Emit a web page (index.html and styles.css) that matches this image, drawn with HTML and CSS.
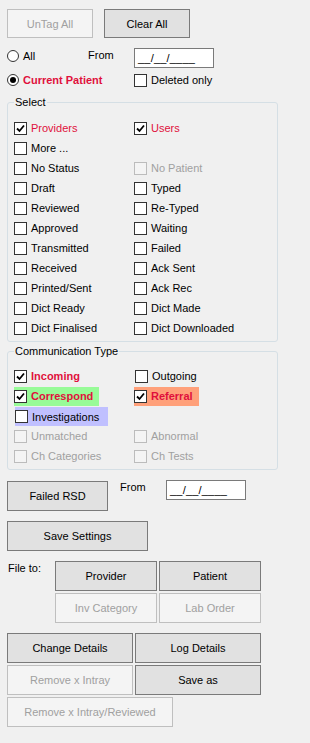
FILE: index.html
```html
<!DOCTYPE html>
<html>
    <head>
        <meta charset="utf-8">
        <title>Intray Filter</title>
        <link rel="stylesheet" href="styles.css">
    </head>
    <body>
        <div class="toprow">
            <button class="btn off top">UnTag All</button>
            <button class="btn top">Clear All</button>
        </div>

        <div class="opts">
            <label class="radio"><span class="dot"></span>All</label>
            <span class="lbl from1">From</span>
            <span class="date d1">__/__/____</span>
            <label class="radio on red bold wide"><span class="dot"></span>Current Patient</label>
            <label class="chk"><span class="box"></span>Deleted only</label>
        </div>

        <fieldset class="group sel">
            <legend>Select</legend>
            <div class="grid">
                <label class="chk red"><span class="box"><svg viewBox="0 0 11 11"><path d="M2 5.5 L4.5 8 L9 2.5"/></svg></span>Providers</label>
                <label class="chk red"><span class="box"><svg viewBox="0 0 11 11"><path d="M2 5.5 L4.5 8 L9 2.5"/></svg></span>Users</label>
                <label class="chk"><span class="box"></span>More ...</label>
                <span></span>
                <label class="chk"><span class="box"></span>No Status</label>
                <label class="chk dis"><span class="box"></span>No Patient</label>
                <label class="chk"><span class="box"></span>Draft</label>
                <label class="chk"><span class="box"></span>Typed</label>
                <label class="chk"><span class="box"></span>Reviewed</label>
                <label class="chk"><span class="box"></span>Re-Typed</label>
                <label class="chk"><span class="box"></span>Approved</label>
                <label class="chk"><span class="box"></span>Waiting</label>
                <label class="chk"><span class="box"></span>Transmitted</label>
                <label class="chk"><span class="box"></span>Failed</label>
                <label class="chk"><span class="box"></span>Received</label>
                <label class="chk"><span class="box"></span>Ack Sent</label>
                <label class="chk"><span class="box"></span>Printed/Sent</label>
                <label class="chk"><span class="box"></span>Ack Rec</label>
                <label class="chk"><span class="box"></span>Dict Ready</label>
                <label class="chk"><span class="box"></span>Dict Made</label>
                <label class="chk"><span class="box"></span>Dict Finalised</label>
                <label class="chk"><span class="box"></span>Dict Downloaded</label>
            </div>
        </fieldset>

        <fieldset class="group comm">
            <legend>Communication Type</legend>
            <div class="grid">
                <label class="chk red bold"><span class="box"><svg viewBox="0 0 11 11"><path d="M2 5.5 L4.5 8 L9 2.5"/></svg></span>Incoming</label>
                <label class="chk nudge"><span class="box"></span>Outgoing</label>
                <label class="chk red bold hl green"><span class="box"><svg viewBox="0 0 11 11"><path d="M2 5.5 L4.5 8 L9 2.5"/></svg></span>Correspond</label>
                <label class="chk red bold hl salmon"><span class="box"><svg viewBox="0 0 11 11"><path d="M2 5.5 L4.5 8 L9 2.5"/></svg></span>Referral</label>
                <label class="chk hl lilac"><span class="box"></span>Investigations</label>
                <span></span>
                <label class="chk dis"><span class="box"></span>Unmatched</label>
                <label class="chk dis"><span class="box"></span>Abnormal</label>
                <label class="chk dis"><span class="box"></span>Ch Categories</label>
                <label class="chk dis"><span class="box"></span>Ch Tests</label>
            </div>
        </fieldset>

        <div class="rsdrow">
            <button class="btn rsd">Failed RSD</button>
            <span class="lbl from2">From</span>
            <span class="date d2">__/__/____</span>
        </div>

        <button class="btn save">Save Settings</button>

        <div class="filerow">
            <span class="lbl fileto">File to:</span>
            <div class="filegrid">
                <button class="btn">Provider</button>
                <button class="btn">Patient</button>
                <button class="btn off">Inv Category</button>
                <button class="btn off">Lab Order</button>
            </div>
        </div>

        <div class="actions">
            <button class="btn">Change Details</button>
            <button class="btn">Log Details</button>
            <button class="btn off">Remove x Intray</button>
            <button class="btn">Save as</button>
            <button class="btn off long">Remove x Intray/Reviewed</button>
        </div>
    </body>
</html>
```

FILE: styles.css
```css
* {
    box-sizing: border-box;
}
body {
    margin: 0;
    background: #f0f0f0;
    font-family: "Liberation Sans", Arial, sans-serif;
    font-size: 11px;
    color: #000;
}
.btn {
    display: block;
    margin: 0;
    padding: 0;
    height: 30px;
    border: 1px solid #7a7a7a;
    background: #e1e1e1;
    font-family: inherit;
    font-size: 11px;
    color: #000;
    text-align: center;
}
.btn.off {
    border-color: #bfbfbf;
    background: #f4f4f4;
    color: #a0a0a0;
}
.red {
    color: #e0103c;
}
.bold {
    font-weight: bold;
}

/* top buttons */
.toprow {
    display: flex;
    gap: 11px;
    padding: 9px 0 0 7px;
}
.btn.top {
    width: 86px;
    height: 29px;
}

/* radio / date options */
.opts {
    display: grid;
    grid-template-columns: 81px 46px 80px;
    grid-template-rows: 20px 20px;
    row-gap: 4px;
    margin: 8px 0 0 7px;
}
.radio {
    display: flex;
    align-items: center;
    gap: 4px;
    white-space: nowrap;
}
.radio .dot {
    width: 12px;
    height: 12px;
    border: 1px solid #333;
    border-radius: 50%;
    background: #fff;
    display: flex;
    align-items: center;
    justify-content: center;
}
.radio.on .dot::after {
    content: "";
    width: 6px;
    height: 6px;
    border-radius: 50%;
    background: #000;
}
.radio.wide {
    grid-column: 1 / 3;
}
.lbl {
    line-height: 18px;
}
.date {
    display: block;
    width: 80px;
    height: 20px;
    border: 1px solid #7a7a7a;
    background: #fff;
    padding-left: 3px;
    line-height: 18px;
    letter-spacing: 0.2px;
}
.d1 {
    margin-top: 2px;
}

/* checkbox groups */
.group {
    margin: 6px 0 0 7px;
    width: 271px;
    padding: 9px 0 3px 6px;
    border: 1px solid #d5dfe5;
    border-radius: 3px;
}
.group legend {
    padding: 0 1px;
    line-height: 13px;
}
.comm {
    margin-top: 3px;
    padding-top: 8px;
}
.grid {
    display: grid;
    grid-template-columns: 120px 1fr;
    grid-auto-rows: 20px;
}
.chk {
    display: flex;
    align-items: center;
    gap: 4px;
    white-space: nowrap;
}
.chk .box {
    width: 13px;
    height: 13px;
    flex: none;
    border: 1px solid #333;
    background: #fff;
}
.chk .box svg {
    display: block;
    width: 11px;
    height: 11px;
    fill: none;
    stroke: #000;
    stroke-width: 1.8;
}
.chk.dis {
    color: #a0a0a0;
}
.chk.dis .box {
    border-color: #bcbcbc;
    background: #f4f4f4;
}
.nudge {
    margin-left: 1px;
}
.hl {
    align-self: center;
    height: 19px;
}
.green {
    background: #98fb98;
    width: 85px;
}
.salmon {
    background: #ffa07a;
    width: 65px;
}
.lilac {
    background: #c0c0ff;
    width: 93px;
    margin-left: 1px;
    margin-top: 1px;
}

/* lower buttons */
.rsdrow {
    display: flex;
    align-items: flex-start;
    margin: 11px 0 0 7px;
}
.btn.rsd {
    width: 101px;
}
.from2 {
    width: 46px;
    margin-left: 12px;
    line-height: 13px;
}
.d2 {
    margin-top: -1px;
}
.btn.save {
    width: 141px;
    margin: 10px 0 0 7px;
}
.filerow {
    display: flex;
    margin: 10px 0 0 8px;
}
.fileto {
    width: 47px;
    line-height: 13px;
    margin-top: 1px;
}
.filegrid {
    display: grid;
    grid-template-columns: 102px 102px;
    grid-auto-rows: 30px;
    gap: 2px;
}
.filegrid .btn,
.actions .btn {
    width: 100%;
}
.actions {
    display: grid;
    grid-template-columns: 126px 126px;
    grid-auto-rows: 30px;
    gap: 2px;
    margin: 10px 0 0 7px;
}
.actions .btn.long {
    width: 166px;
    grid-column: 1 / 3;
}
```
